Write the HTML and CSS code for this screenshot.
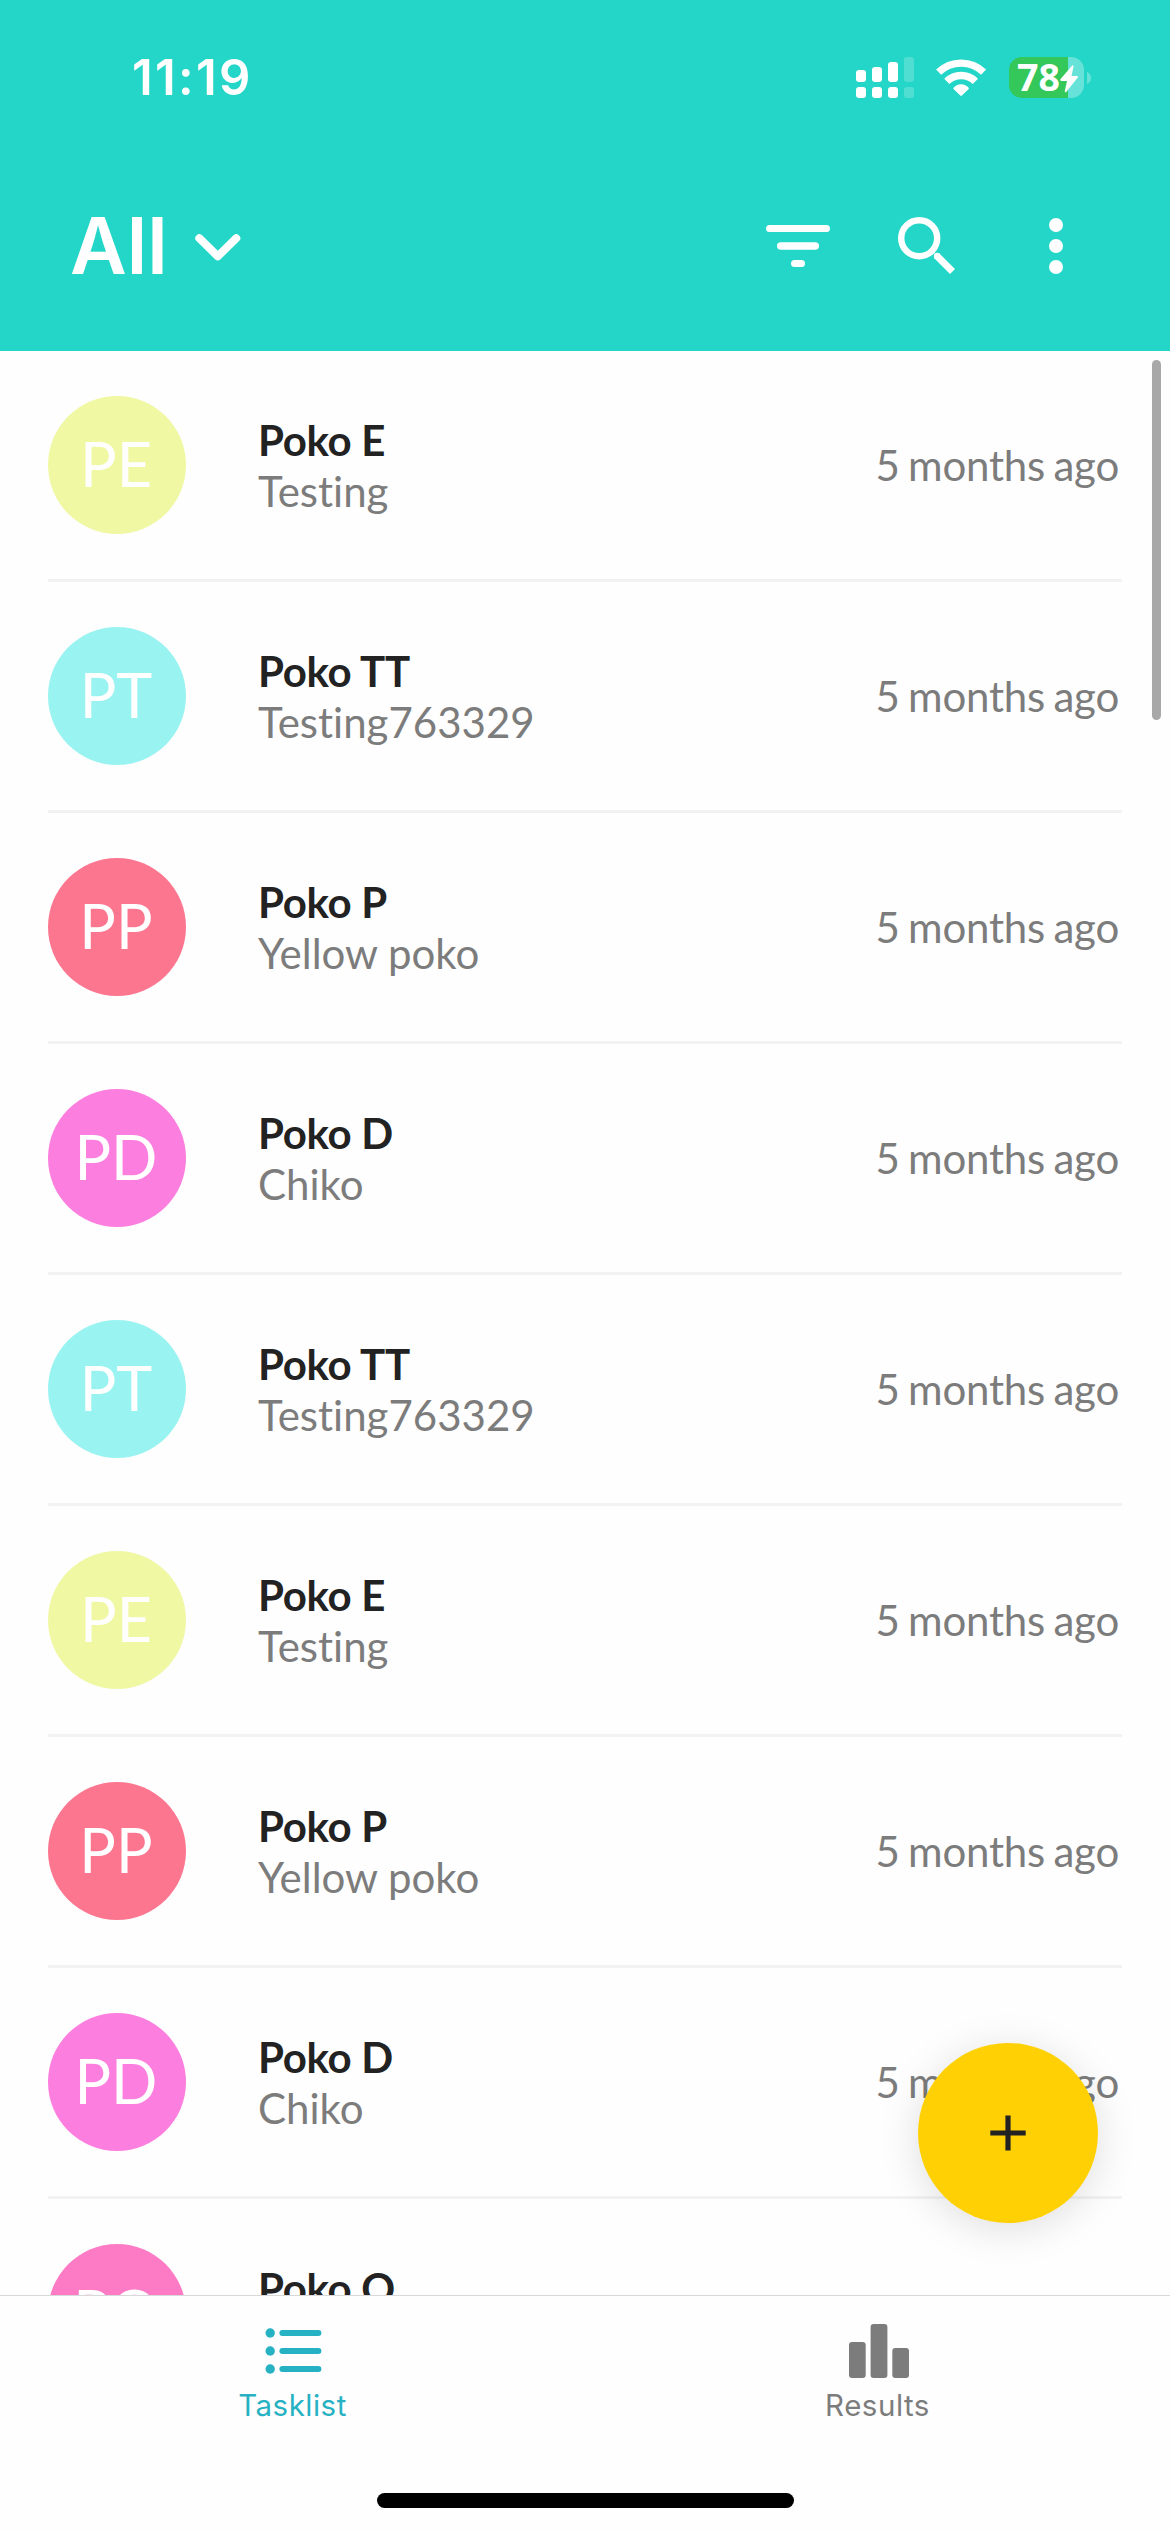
FILE: index.html
```html
<!DOCTYPE html>
<html lang="en">
<head>
<meta charset="utf-8">
<title>Tasklist</title>
<link rel="stylesheet" href="styles.css">
</head>
<body>
<div class="app">
  <header class="header">
    <div class="status">
      <span class="clock">11:19</span>
      <div class="indicators">
        <svg class="signal" width="58" height="41" viewBox="0 0 58 41" fill="#fff">
          <rect x="0" y="13" width="10" height="12" rx="3"/><rect x="0" y="30" width="10" height="11" rx="3"/>
          <rect x="16" y="10" width="10" height="15" rx="3"/><rect x="16" y="30" width="10" height="11" rx="3"/>
          <rect x="32" y="5" width="10" height="20" rx="3"/><rect x="32" y="30" width="10" height="11" rx="3"/>
          <g opacity=".2"><rect x="48" y="0" width="10" height="25" rx="3"/><rect x="48" y="30" width="10" height="11" rx="3"/></g>
        </svg>
        <svg class="wifi" width="52" height="38" viewBox="-.4 0 52 38">
          <g fill="none" stroke="#fff" stroke-width="7.3">
            <path d="M3.2 13.2A32.5 32.5 0 0 1 48.2 13.2"/>
            <path d="M11.4 22.4A20.3 20.3 0 0 1 40 22.4"/>
          </g>
          <path fill="#fff" d="M18 29A9.8 9.8 0 0 1 33.4 29Q33.6 29.6 33 30.2L26.5 36.6Q25.7 37.2 24.9 36.6L18.4 30.2Q17.8 29.6 18 29Z"/>
        </svg>
        <div class="battery">
          <span class="level">78</span>
          <svg class="bolt" width="18" height="28" viewBox="0 0 18 28"><path fill="#fff" d="M12.2 .6Q13.8-.3 13.5 1.5L11.5 11H17Q18.6 11.2 17.6 12.8L6.4 26.8Q4.6 28.2 4.8 26L7 16H1.3Q-.5 15.7 .6 14Z"/></svg>
        </div>
        <svg class="battery-cap" width="4" height="12" viewBox="0 0 4 12"><path fill="#fff" opacity=".3" d="M0 0Q4 2 4 6T0 12Z"/></svg>
      </div>
    </div>
    <div class="toolbar">
      <h1 class="title">All</h1>
      <svg class="chevron" width="46" height="28" viewBox="0 0 46 28"><path d="M4.3 4.2L22.8 22.3L41.3 4.2" fill="none" stroke="#fff" stroke-width="8" stroke-linecap="round" stroke-linejoin="round"/></svg>
      <div class="actions">
        <svg class="filter" width="64" height="42" viewBox="0 0 64 42" fill="#fff"><rect x="0" y="0" width="64" height="7" rx="3.5"/><rect x="11" y="17.3" width="42" height="7.4" rx="3.7"/><rect x="25" y="35" width="14" height="7" rx="3.5"/></svg>
        <svg class="search" width="57" height="57" viewBox="0 0 57 57" fill="none" stroke="#fff"><circle cx="21.2" cy="21.2" r="18" stroke-width="6.4"/><path d="M38.5 38.5L54.5 54.5" stroke-width="7"/><circle cx="39" cy="39" r="3.2" fill="#fff" stroke="none"/></svg>
        <svg class="more" width="14" height="56" viewBox="0 0 14 56" fill="#fff"><circle cx="7" cy="7" r="7"/><circle cx="7" cy="28" r="7"/><circle cx="7" cy="49" r="7"/></svg>
      </div>
    </div>
  </header>

  <main class="list">
    <article class="row"><div class="avatar lime">PE</div><div class="who"><div class="name">Poko E</div><div class="task">Testing</div></div><time class="when">5 months ago</time></article>
    <article class="row"><div class="avatar aqua">PT</div><div class="who"><div class="name">Poko TT</div><div class="task">Testing763329</div></div><time class="when">5 months ago</time></article>
    <article class="row"><div class="avatar coral">PP</div><div class="who"><div class="name">Poko P</div><div class="task">Yellow poko</div></div><time class="when">5 months ago</time></article>
    <article class="row"><div class="avatar orchid">PD</div><div class="who"><div class="name">Poko D</div><div class="task">Chiko</div></div><time class="when">5 months ago</time></article>
    <article class="row"><div class="avatar aqua">PT</div><div class="who"><div class="name">Poko TT</div><div class="task">Testing763329</div></div><time class="when">5 months ago</time></article>
    <article class="row"><div class="avatar lime">PE</div><div class="who"><div class="name">Poko E</div><div class="task">Testing</div></div><time class="when">5 months ago</time></article>
    <article class="row"><div class="avatar coral">PP</div><div class="who"><div class="name">Poko P</div><div class="task">Yellow poko</div></div><time class="when">5 months ago</time></article>
    <article class="row"><div class="avatar orchid">PD</div><div class="who"><div class="name">Poko D</div><div class="task">Chiko</div></div><time class="when">5 months ago</time></article>
    <article class="row"><div class="avatar pink">PO</div><div class="who"><div class="name">Poko O</div></div></article>
    <div class="scrollbar"></div>
    <button class="fab" aria-label="Add task"><svg width="36" height="36" viewBox="0 0 36 36"><path d="M.3 18H35.7M18 .5V35.5" stroke="#222" stroke-width="5.2"/></svg></button>
  </main>

  <nav class="tabs">
    <a class="tab active">
      <svg class="tab-icon" width="60" height="60" viewBox="0 0 60 60" fill="#27b2c3"><circle cx="7.2" cy="13" r="4.7"/><circle cx="7.2" cy="31" r="4.7"/><circle cx="7.2" cy="49" r="4.7"/><rect x="16.4" y="10" width="42" height="6" rx="3"/><rect x="16.4" y="28" width="42" height="6" rx="3"/><rect x="16.4" y="46" width="42" height="6" rx="3"/></svg>
      <span>Tasklist</span>
    </a>
    <a class="tab">
      <svg class="tab-icon results-icon" width="60" height="60" viewBox="0 0 60 60" fill="#7c7c7c"><rect x="0" y="22" width="16.7" height="36" rx="3"/><rect x="21.6" y="4" width="16.8" height="54" rx="3"/><rect x="43.3" y="28" width="16.7" height="30" rx="3"/></svg>
      <span>Results</span>
    </a>
    <div class="home-bar"></div>
  </nav>
</div>
</body>
</html>
```
FILE: styles.css
```css
* { box-sizing: border-box; }
body { margin: 0; background: #fefefe; font-family: Lato, sans-serif; }
svg { display: block; flex: none; }
.app { width: 1170px; height: 2532px; display: flex; flex-direction: column; overflow: hidden; font-variant-ligatures: none; }

/* Header */
.header { flex: none; height: 351px; background: #24d6c8; color: #fff; }
.status { height: 141px; padding: 57px 79px 0 132px; display: flex; justify-content: space-between; align-items: flex-start; }
.clock { font: 600 49px/42px Inter, sans-serif; letter-spacing: 2.3px; }
.indicators { display: flex; }
.wifi { margin: 2px 0 0 21px; }
.battery { width: 75px; height: 41px; margin-left: 22px; padding-left: 8px; border-radius: 13px; display: flex; background: linear-gradient(90deg, #34c759 59px, rgba(255,255,255,.3) 59px); }
.level { font: 700 37.5px/39px "Open Sans", sans-serif; width: 43px; }
.bolt { margin-top: 8px; }
.battery-cap { margin: 15px 0 0 3px; }

.toolbar { height: 210px; padding: 0 107px 0 70px; display: flex; align-items: center; }
.title { margin: 0; width: 125px; font: 600 78px/96px Inter, sans-serif; }
.chevron { margin-top: 4px; }
.actions { margin-left: auto; display: flex; align-items: center; }
.search { margin: 0 94px 2px 68px; }

/* Task list */
.list { position: relative; flex: 1; min-height: 0; overflow: hidden; padding: 0 48px; }
.row { height: 231px; display: flex; align-items: center; border-bottom: 3px solid #f2f2f2; }
.avatar { flex: none; width: 138px; height: 138px; padding: 0 2px 3px 0; border-radius: 50%; display: flex; align-items: center; justify-content: center; color: #fff; font-size: 61px; line-height: 1; }
.lime { background: #f0f8a4; }
.aqua { background: #99f3f0; }
.coral { background: #fd7690; }
.orchid { background: #fc7edf; }
.pink { background: #fd7bc5; }
.who { margin-left: 72px; flex: 1; height: 104px; padding-top: 2px; font-size: 42px; line-height: 51px; }
.name { font-weight: 700; color: #222; letter-spacing: -.3px; }
.task { color: #7c7c7c; }
.when { font-size: 42px; line-height: 50px; color: #7c7c7c; margin-right: 3px; letter-spacing: -.2px; word-spacing: -2.2px; }
.scrollbar { position: absolute; top: 9px; right: 9px; width: 9px; height: 360px; border-radius: 5px; background: #a8a8a8; }
.fab { position: absolute; top: 1692px; left: 918px; width: 180px; height: 180px; padding: 0; border: 0; border-radius: 50%; background: #ffd105; box-shadow: 0 6px 40px rgba(0,0,0,.13); display: flex; align-items: center; justify-content: center; }

/* Bottom tabs */
.tabs { position: relative; flex: none; height: 237px; border-top: 1px solid #d8d8d8; background: #fefefe; display: flex; }
.tab { flex: 1; display: flex; flex-direction: column; align-items: center; color: #7c7c7c; font: 400 29.5px/36px Inter, sans-serif; letter-spacing: .5px; padding-top: 24px; }
.tab span { margin-top: 7px; }
.results-icon { margin-left: 3px; }
.active { color: #27b2c3; }
.home-bar { position: absolute; left: 377px; bottom: 24px; width: 417px; height: 15px; border-radius: 8px; background: #000; }
```
